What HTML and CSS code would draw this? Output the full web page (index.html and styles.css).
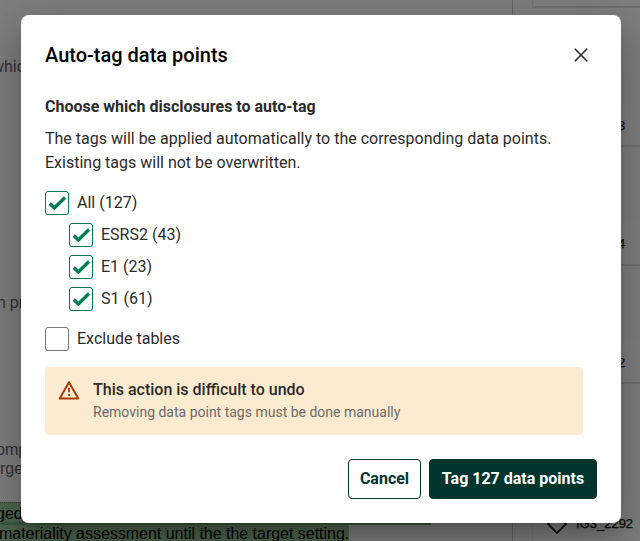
FILE: index.html
```html
<!DOCTYPE html>
<html lang="en">
<head>
<meta charset="utf-8">
<title>Auto-tag data points</title>
<link rel="stylesheet" href="styles.css">
</head>
<body>
<div class="page">
  <main class="document">
    <p class="line which">which</p>
    <p class="line process">n pr</p>
    <p class="line company">omp</p>
    <p class="line target">rge</p>
    <p class="tagged first"><span>ged</span></p>
    <p class="tagged second"><span>materiality assessment until the the target setting.</span></p>
  </main>
  <aside class="sidebar">
    <div class="card top"></div>
    <div class="card"><span class="code">3</span></div>
    <div class="card"><span class="code">4</span></div>
    <div class="card tall"><span class="code">2</span></div>
    <div class="card last">
      <svg class="tag" viewBox="0 0 24 24"><path d="M3 12 12 3l9 9-9 9z"/></svg>
      <span>IG3_2292</span>
    </div>
  </aside>
</div>
<div class="overlay">
  <section class="modal" role="dialog" aria-labelledby="title">
    <header class="header">
      <h1 id="title">Auto-tag data points</h1>
      <button class="close" aria-label="Close"><svg viewBox="0 0 16 16"><path d="m1.8 1.8 12.4 12.4M14.2 1.8 1.8 14.2"/></svg></button>
    </header>
    <h2>Choose which disclosures to auto-tag</h2>
    <p class="intro">The tags will be applied automatically to the corresponding data points. Existing tags will not be overwritten.</p>
    <div class="options">
      <label class="option"><span class="box checked"><svg viewBox="0 0 24 24"><path d="m4.8 12.6 4.6 4.3L20 6.5"/></svg></span>All (127)</label>
      <label class="option nested"><span class="box checked"><svg viewBox="0 0 24 24"><path d="m4.8 12.6 4.6 4.3L20 6.5"/></svg></span>ESRS2 (43)</label>
      <label class="option nested"><span class="box checked"><svg viewBox="0 0 24 24"><path d="m4.8 12.6 4.6 4.3L20 6.5"/></svg></span>E1 (23)</label>
      <label class="option nested"><span class="box checked"><svg viewBox="0 0 24 24"><path d="m4.8 12.6 4.6 4.3L20 6.5"/></svg></span>S1 (61)</label>
      <label class="option exclude"><span class="box"></span>Exclude tables</label>
    </div>
    <div class="warning">
      <svg class="alert" viewBox="0 0 24 24"><path d="M12 4.3 2.7 20.5h18.6z"/><path class="mark" d="M12 9.8v4.4M12 16v2"/></svg>
      <div>
        <strong>This action is difficult to undo</strong>
        <p>Removing data point tags must be done manually</p>
      </div>
    </div>
    <footer class="actions">
      <button class="button secondary">Cancel</button>
      <button class="button primary">Tag 127 data points</button>
    </footer>
  </section>
</div>
</body>
</html>
```
FILE: styles.css
```css
* { box-sizing: border-box; }
body { margin: 0; height: 541px; overflow: hidden; font-family: Roboto, sans-serif; color: #2b2b2b; }
h1, h2, p { margin: 0; }
button { font: inherit; padding: 0; }

.page { display: flex; height: 541px; overflow: hidden; background: #fcfcfc; }
.document { width: 513px; flex: none; border-right: 1px solid #ccc; overflow: hidden; font: 16px/18px "Liberation Sans", sans-serif; }
.line { color: #666; white-space: nowrap; }
.which { margin: 58px 0 0 -8px; font-family: Roboto, sans-serif; }
.process { margin: 218px 0 0 -3px; font-family: Roboto, sans-serif; }
.company { margin: 129px 0 0 -4px; }
.target { margin-top: 1px; }
.tagged { color: #000; white-space: nowrap; background: #98c89b; }
.first { width: 431px; height: 23px; margin-top: 24px; border-top: 1px dotted #608464; border-bottom: 3px solid #7cb380; }
.first span { position: relative; top: 2px; margin-left: -4px; }
.second { width: 349px; height: 18px; line-height: 18px; letter-spacing: -0.02px; text-indent: -1px; }

.sidebar { flex: 1; padding-left: 19px; font: 13px/16px "Liberation Sans", sans-serif; color: #111; }
.card { display: flex; align-items: center; height: 44px; margin-bottom: 74.5px; padding: 3px 0 0 85px; background: #fff; border-left: 1px solid #ececec; border-bottom: 2px solid #dedede; }
.card.top { height: 8px; margin-bottom: 95px; }
.card.tall { margin-bottom: 119px; }
.card.last { padding: 0 0 0 12px; gap: 7px; -webkit-text-stroke: .25px #111; }
.code { -webkit-text-stroke: .25px #111; }
.tag { flex: none; width: 24px; height: 24px; fill: none; stroke: #222; stroke-width: 1.8; }

.overlay { position: absolute; inset: 0; display: flex; justify-content: center; padding: 15px 0 0 2px; background: rgba(0, 0, 0, .5); overflow: hidden; }
.modal { width: 600px; height: 508px; padding: 24px; border-radius: 8px; background: #fff; box-shadow: 0 11px 15px -7px rgba(0, 0, 0, .2), 0 24px 38px 3px rgba(0, 0, 0, .14), 0 9px 46px 8px rgba(0, 0, 0, .12); }
.header { display: flex; align-items: center; justify-content: space-between; height: 32px; margin-bottom: 24px; }
h1 { font-size: 20px; line-height: 32px; font-weight: 500; color: #000; }
.close { display: flex; align-items: center; justify-content: center; width: 32px; height: 32px; border: 0; background: none; }
.close svg { width: 16px; height: 16px; fill: none; stroke: #2b2b2b; stroke-width: 1.6; }
h2 { margin-bottom: 8px; font-size: 16px; line-height: 24px; font-weight: 700; }
.intro { font-size: 16px; line-height: 24px; }
.options { display: flex; flex-direction: column; gap: 8px; margin-top: 16px; }
.option { display: flex; align-items: center; gap: 8px; height: 24px; font-size: 16px; line-height: 24px; }
.nested { margin-left: 24px; }
.exclude { margin-top: 8px; }
.box { width: 24px; height: 24px; border: 1px solid #777; border-radius: 3px; background: #fff; }
.box.checked { border-color: #007a53; }
.box svg { display: block; width: 24px; height: 24px; margin: -1px; fill: none; stroke: #007a53; stroke-width: 3.4; }
.warning { display: flex; gap: 12px; width: 538px; height: 68px; margin-top: 16px; padding: 11px 12px; border-radius: 4px; background: #fcebd0; }
.alert { width: 24px; height: 24px; fill: none; stroke: #a83c09; stroke-width: 2; stroke-linejoin: round; }
.alert .mark { stroke-width: 1.8; }
.warning strong { display: block; font-size: 16px; line-height: 24px; font-weight: 500; }
.warning p { font-size: 14px; line-height: 20px; color: #6b6b6b; }
.actions { display: flex; justify-content: flex-end; gap: 8px; margin-top: 24px; }
.button { height: 40px; padding-bottom: 2px; border: 1px solid #00352d; border-radius: 4px; font-size: 16px; font-weight: 700; }
.secondary { width: 73px; background: #fff; color: #00352d; }
.primary { width: 168px; background: #00352d; color: #fff; }
```
